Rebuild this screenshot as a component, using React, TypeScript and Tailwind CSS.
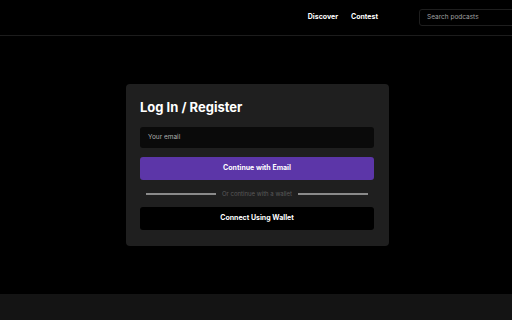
import React from 'react';

const font = { fontFamily: 'Inter, "Noto Sans", sans-serif' };

export default function App() {
  return (
    <div className="flex h-[320px] w-[512px] flex-col overflow-hidden bg-black text-white" style={font}>
      <header className="flex h-[36px] shrink-0 items-center justify-end border-b border-[#1c1c1c]">
        <nav className="flex items-center gap-[13px] text-[7px] font-bold text-white">
          <a>Discover</a>
          <a>Contest</a>
        </nav>
        <div className="ml-[41px] -mr-[8px] flex h-[17px] w-[101px] shrink-0 items-center rounded-[3px] border border-[#1e1e1e] px-[7px] text-[6.5px] text-[#a0a0a0]">
          Search podcasts
        </div>
      </header>

      <main className="flex flex-1 items-center justify-center pl-[3px]">
        <div className="flex h-[162px] w-[263px] flex-col rounded-[4px] bg-[#1f1f1f] pb-[15px] pl-[14px] pr-[15px] pt-[15px]">
          <h2 className="text-[13px] font-bold leading-[16px] text-white">Log In / Register</h2>
          <div className="mt-[12px] flex h-[21px] items-center rounded-[3px] bg-[#0a0a0a] px-[8px] text-[6.5px] text-[#b0b0b0]">
            Your email
          </div>
          <button className="mt-[9px] flex h-[23px] items-center justify-center rounded-[3px] bg-[#5c36a8] text-[7px] font-bold text-white">
            Continue with Email
          </button>
          <div className="mt-[10px] flex h-[7px] items-center gap-[6px] px-[6px]">
            <div className="h-[2px] flex-1 bg-[#8a8a8a]" />
            <span className="text-[6px] leading-[7px] text-[#5a5a5a]">Or continue with a wallet</span>
            <div className="h-[2px] flex-1 bg-[#8a8a8a]" />
          </div>
          <button className="mt-[10px] flex h-[23px] items-center justify-center rounded-[3px] bg-black text-[7px] font-bold text-white">
            Connect Using Wallet
          </button>
        </div>
      </main>

      <footer className="h-[26px] shrink-0 bg-[#141414]" />
    </div>
  );
}
